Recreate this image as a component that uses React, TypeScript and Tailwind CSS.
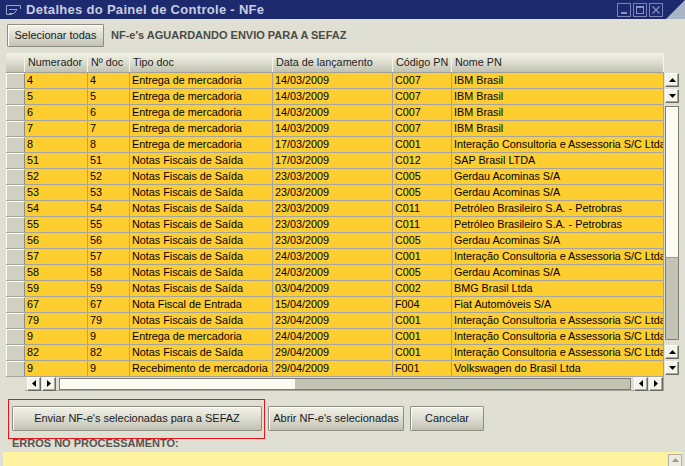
import React from 'react'

type Row = [string, string, string, string, string, string]

const NS = "Notas Fiscais de Saída"
const EM = "Entrega de mercadoria"
const INT = "Interação Consultoria e Assessoria S/C Ltda"
const GER = "Gerdau Acominas S/A"
const PET = "Petróleo Brasileiro S.A. - Petrobras"

const rows: Row[] = [
  ["4", "4", EM, "14/03/2009", "C007", "IBM Brasil"],
  ["5", "5", EM, "14/03/2009", "C007", "IBM Brasil"],
  ["6", "6", EM, "14/03/2009", "C007", "IBM Brasil"],
  ["7", "7", EM, "14/03/2009", "C007", "IBM Brasil"],
  ["8", "8", EM, "17/03/2009", "C001", INT],
  ["51", "51", NS, "17/03/2009", "C012", "SAP Brasil LTDA"],
  ["52", "52", NS, "23/03/2009", "C005", GER],
  ["53", "53", NS, "23/03/2009", "C005", GER],
  ["54", "54", NS, "23/03/2009", "C011", PET],
  ["55", "55", NS, "23/03/2009", "C011", PET],
  ["56", "56", NS, "23/03/2009", "C005", GER],
  ["57", "57", NS, "24/03/2009", "C001", INT],
  ["58", "58", NS, "24/03/2009", "C005", GER],
  ["59", "59", NS, "03/04/2009", "C002", "BMG Brasil Ltda"],
  ["67", "67", "Nota Fiscal de Entrada", "15/04/2009", "F004", "Fiat Automóveis S/A"],
  ["79", "79", NS, "23/04/2009", "C001", INT],
  ["9", "9", EM, "24/04/2009", "C001", INT],
  ["82", "82", NS, "29/04/2009", "C001", INT],
  ["9", "9", "Recebimento de mercadoria", "29/04/2009", "F001", "Volkswagen do Brasil Ltda"],
]

const headers = ["Numerador", "Nº doc", "Tipo doc", "Data de lançamento", "Código PN", "Nome PN"]
const cols = "grid-cols-[19px_63px_42px_143px_120px_59px_212px]"

const Arrow = ({ dir }: { dir: "up" | "down" | "left" | "right" }) => {
  const pts = {
    up: "1,6 4.5,2 8,6",
    down: "1,2 4.5,6 8,2",
    left: "6,1 2,4.5 6,8",
    right: "2,1 6,4.5 2,8",
  }[dir]
  return <svg width="9" height="9" viewBox="0 0 9 9"><polygon points={pts} fill="#000" /></svg>
}

const ScrollBtn = ({ dir }: { dir: "up" | "down" | "left" | "right" }) =>
  <div className="w-[14px] h-[14px] flex items-center justify-center bg-[#f4f4ec] border border-t-white border-l-white border-r-[#6b6b60] border-b-[#6b6b60] shadow-[inset_-1px_-1px_0_#a8a898]">
    <Arrow dir={dir} />
  </div>

const Btn = (props: { label: string, w: string }) =>
  <button className={`${props.w} h-[25px] text-[11px] whitespace-nowrap text-[#1a1a1a] border border-[#8e8e80] rounded-[1px] bg-gradient-to-b from-[#f2f2ea] via-[#dcdcd0] to-[#c2c2b4] shadow-[inset_1px_1px_0_#ffffff]`}>
    {props.label}
  </button>

export default function App() {
  return <div className="w-[685px] h-[466px] bg-[#dfdfd3] overflow-hidden relative text-[10.8px] text-black" style={{ fontFamily: '"Liberation Sans", Arial, sans-serif' }}>
    {/* title bar */}
    <div className="h-[19px] bg-[#1d2a6d] flex items-center relative">
      <svg className="ml-[5px]" width="17" height="12" viewBox="0 0 17 12">
        <path d="M1.5 1.5 H15.5 V5 M1.5 1.5 V10.5 H7 M4 5.5 H12 L9 9.5 H4" fill="none" stroke="#9aa2c8" strokeWidth="1" />
      </svg>
      <span className="ml-[4px] text-[13px] font-bold text-[#c9cde2] tracking-[0.3px]">Detalhes do Painel de Controle - NFe</span>
      <div className="ml-auto mr-[22px] flex gap-[2px]">
        <div className="w-[14px] h-[14px] border border-[#7a84b4] flex items-end justify-center pb-[2px]"><div className="w-[6px] h-[2px] bg-[#8a94c0]" /></div>
        <div className="w-[14px] h-[14px] border border-[#7a84b4] p-[2px]"><div className="w-full h-full border border-[#8a94c0] border-t-2" /></div>
        <div className="w-[14px] h-[14px] border border-[#7a84b4] flex items-center justify-center">
          <svg width="8" height="8" viewBox="0 0 8 8"><path d="M0.5 0.5 L7.5 7.5 M7.5 0.5 L0.5 7.5" stroke="#8a94c0" strokeWidth="1.2" /></svg>
        </div>
      </div>
      <div className="absolute right-0 top-0 w-[19px] h-[19px] bg-[#a9b4c6] [clip-path:polygon(100%_0,100%_100%,0_100%)]" />
    </div>

    {/* toolbar */}
    <div className="flex items-center mt-[5px] ml-[7px] h-[23px]">
      <Btn label="Selecionar todas" w="w-[97px] !h-[23px]" />
      <span className="ml-[7px] font-bold text-[11px] text-[#4b4b45]">NF-e's AGUARDANDO ENVIO PARA A SEFAZ</span>
    </div>

    {/* table */}
    <div className="mt-[6px] ml-[6px] flex w-[674px]">
      <div className="w-[658px]">
        <div className={`grid ${cols} h-[19px] bg-gradient-to-b from-[#f2f2e6] via-[#dcdccf] to-[#c2c2b2]`}>
          <div className="border-r border-[#f4f4ea]" />
          {headers.map((h, i) =>
            <div key={i} className="pl-[3px] flex items-center border-r border-[#f4f4ea] text-[#222] whitespace-nowrap overflow-hidden">{h}</div>)}
        </div>
        <div className="border-t border-[#a0a098]">
          {rows.map((r, i) =>
            <div key={i} className={`grid ${cols} h-[16px] border-b border-[#a4a49c]`}>
              <div className="bg-[#d0d0c2] border-t border-l border-white border-r border-r-[#8c8c84]" />
              {r.map((c, j) =>
                <div key={j} className="bg-[#fecd2f] border-r border-[#a4a49c] pl-[2px] leading-[15px] whitespace-nowrap overflow-hidden">{c}</div>)}
            </div>)}
        </div>
        {/* horizontal scroll */}
        <div className="ml-[19px] h-[14px] flex items-center gap-[1px] pl-[2px] border-b border-r border-[#a4a49c] bg-[#dfdfd3]">
          <ScrollBtn dir="left" />
          <ScrollBtn dir="right" />
          <div className="flex-1 h-[12px] flex mx-[2px] border border-[#7c7c74]">
            <div className="w-[235px] bg-[#fbfbf2]" />
            <div className="flex-1 bg-[#c4c4b4]" />
          </div>
          <ScrollBtn dir="left" />
          <ScrollBtn dir="right" />
        </div>
      </div>
      {/* vertical scroll */}
      <div className="w-[16px] pt-[20px] flex flex-col items-center gap-[2px]">
        <ScrollBtn dir="up" />
        <ScrollBtn dir="down" />
        <div className="w-[14px] h-[234px] mt-[1px] border border-[#7c7c74] flex flex-col">
          <div className="h-[151px] bg-[#fbfbf2] border-b border-[#9a9a90]" />
          <div className="flex-1 bg-[#c4c4b4]" />
        </div>
        <div className="mt-[3px]"><ScrollBtn dir="up" /></div>
        <ScrollBtn dir="down" />
      </div>
    </div>

    {/* buttons */}
    <div className="flex items-center mt-[8px] ml-[8px]">
      <div className="w-[257px] h-[40px] border border-[#e8141c] pl-[3px] pt-[6px]">
        <Btn label="Enviar NF-e's selecionadas para a SEFAZ" w="w-[250px]" />
      </div>
      <div className="ml-[3px] mb-[1px] flex gap-[6px]">
        <Btn label="Abrir NF-e's selecionadas" w="w-[136px]" />
        <Btn label="Cancelar" w="w-[74px]" />
      </div>
    </div>
    <div className="ml-[12px] mt-[-4px] font-bold text-[11px] text-[#55554f]">ERROS NO PROCESSAMENTO:</div>
    <div className="mt-[0px] ml-[3px] mr-[3px] h-[20px] flex bg-[#fff2a1]">
      <div className="flex-1" />
      <div className="w-[14px] h-[14px] mt-[2px] flex items-center justify-center bg-[#ececE2] border border-[#b0b0a4]">
        <svg width="9" height="9" viewBox="0 0 9 9"><polygon points="1,6 4.5,2 8,6" fill="#9a9a90" /></svg>
      </div>
    </div>
  </div>
}
